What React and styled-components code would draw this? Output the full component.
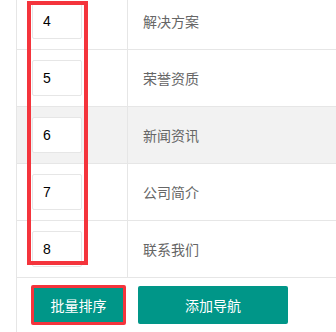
import React from "react";
import styled, { createGlobalStyle } from "styled-components";

const GlobalStyle = createGlobalStyle`
  html, body {
    margin: 0;
    padding: 0;
    background: #fff;
    overflow: hidden;
  }
  body {
    font-family: "Liberation Sans", Arial, "Noto Sans CJK SC", sans-serif;
    font-size: 14px;
  }
`;

const rows = [
  { sort: 4, name: "解决方案" },
  { sort: 5, name: "荣誉资质" },
  { sort: 6, name: "新闻资讯" },
  { sort: 7, name: "公司简介" },
  { sort: 8, name: "联系我们" },
];

const App = () => {
  return (
    <Page>
      <GlobalStyle />
      <Table>
        {rows.map((row, i) => (
          <Row key={row.sort} $striped={i === 2}>
            <SortCell>
              <SortInput defaultValue={row.sort} />
            </SortCell>
            <NameCell>{row.name}</NameCell>
          </Row>
        ))}
        <Mark />
        <Actions>
          <Button $marked>批量排序</Button>
          <Button $wide>添加导航</Button>
        </Actions>
      </Table>
    </Page>
  );
};

const Page = styled.div`
  width: 336px;
  height: 332px;
  padding-left: 16px;
  box-sizing: border-box;
  overflow: hidden;
`;

const Table = styled.div`
  position: relative;
  margin-top: -7px;
  border-left: 1px solid #e6e6e6;
  width: 400px;
`;

const Row = styled.div`
  display: grid;
  grid-template-columns: 111px 1fr;
  height: 56px;
  border-bottom: 1px solid #e6e6e6;
  background: ${({ $striped }) => ($striped ? "#f2f2f2" : "#fff")};
`;

const SortCell = styled.div`
  display: flex;
  align-items: center;
  padding-left: 15px;
  border-right: 1px solid #e6e6e6;
`;

const SortInput = styled.input`
  box-sizing: border-box;
  width: 50px;
  height: 36px;
  padding: 0 10px;
  border: 1px solid #e6e6e6;
  border-radius: 2px;
  background: #fff;
  color: #000;
  font-family: "Liberation Sans", Arial, sans-serif;
  font-size: 14px;
  outline: none;
`;

const NameCell = styled.div`
  display: flex;
  align-items: center;
  padding-left: 15px;
  color: #666;
  font-family: "Noto Sans CJK SC", "Liberation Sans", sans-serif;
  font-size: 14px;
`;

/* red annotation box drawn over the sort column */
const Mark = styled.div`
  position: absolute;
  left: 10px;
  top: 8px;
  width: 61px;
  height: 264px;
  box-sizing: border-box;
  border: 4px solid #f4343c;
  pointer-events: none;
`;

const Actions = styled.div`
  display: flex;
  align-items: center;
  gap: 12px;
  height: 54px;
  padding-left: 14px;
`;

const Button = styled.button`
  box-sizing: border-box;
  height: ${({ $marked }) => ($marked ? "40px" : "38px")};
  width: ${({ $wide, $marked }) => ($wide ? "150px" : $marked ? "95px" : "auto")};
  padding: 0;
  border: ${({ $marked }) => ($marked ? "3px solid #f4343c" : "none")};
  border-radius: 2px;
  background: #009688;
  color: #fff;
  font-family: "Noto Sans CJK SC", "Liberation Sans", sans-serif;
  font-size: 14px;
  cursor: pointer;
`;

export default App;
